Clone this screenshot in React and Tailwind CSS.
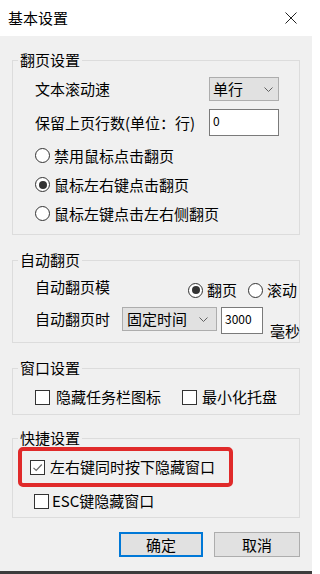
import React from "react";

const font = { fontFamily: '"Noto Sans CJK SC", "Noto Sans", sans-serif' };

function Chevron() {
  return (
    <svg width="9" height="5" viewBox="0 0 9 5" className="shrink-0">
      <path d="M0.5 0.5 L4.5 4.5 L8.5 0.5" fill="none" stroke="#606060" strokeWidth="1" />
    </svg>
  );
}

function Radio({ checked, label }) {
  return (
    <div className="flex items-center gap-[4px]">
      <span className="w-[15px] h-[15px] rounded-full border border-[#333] bg-white flex items-center justify-center shrink-0">
        {checked && <span className="w-[8px] h-[8px] rounded-full bg-[#333]" />}
      </span>
      <span className="whitespace-nowrap">{label}</span>
    </div>
  );
}

function Checkbox({ checked, label, gap = "gap-[6px]" }) {
  return (
    <div className={`flex items-center ${gap}`}>
      <span className="w-[15px] h-[15px] border border-[#333] bg-white flex items-center justify-center shrink-0">
        {checked && (
          <svg width="13" height="13" viewBox="0 0 13 13">
            <path d="M2.5 6.8 L5.2 9.5 L10.8 3.5" fill="none" stroke="#666" strokeWidth="1.2" />
          </svg>
        )}
      </span>
      <span className="whitespace-nowrap">{label}</span>
    </div>
  );
}

function Group({ title, className = "", children }) {
  return (
    <fieldset className={`min-w-0 border border-[#dcdcdc] ${className}`}>
      <legend className="ml-[5px] px-[2px] leading-[20px]">{title}</legend>
      {children}
    </fieldset>
  );
}

export default function App() {
  return (
    <div
      className="w-[312px] h-[574px] flex flex-col bg-[#f0f0f0] text-[15px] leading-[20px] text-black overflow-hidden"
      style={font}
    >
      {/* 标题栏 */}
      <div className="h-[36px] bg-white flex items-center justify-between pl-[8px] pr-[15px] shrink-0">
        <span>基本设置</span>
        <svg width="12" height="12" viewBox="0 0 12 12">
          <path d="M0.5 0.5 L11.5 11.5 M11.5 0.5 L0.5 11.5" stroke="#222" strokeWidth="1" />
        </svg>
      </div>

      <div className="flex-1 flex flex-col px-3">
        {/* 翻页设置 */}
        <Group title="翻页设置" className="mt-[14px]">
          <div className="pl-[22px] pr-[20px] pt-[7px] pb-[6px]">
            <div className="h-[24px] flex items-center justify-between">
              <span>文本滚动速</span>
              <div className="w-[70px] h-[24px] bg-[#e1e1e1] border border-[#adadad] flex items-center justify-between pl-[3px] pr-[5px]">
                <span>单行</span>
                <Chevron />
              </div>
            </div>
            <div className="mt-[8px] h-[27px] flex items-center justify-between">
              <span>保留上页行数(单位：行)</span>
              <div className="w-[70px] h-[27px] bg-white border border-[#7a7a7a] pl-[3px] pt-[1px] text-[12px] leading-[20px]">
                0
              </div>
            </div>
            <div className="mt-[5px]">
              <div className="h-[29px] flex items-center">
                <Radio label="禁用鼠标点击翻页" />
              </div>
              <div className="h-[29px] flex items-center">
                <Radio checked label="鼠标左右键点击翻页" />
              </div>
              <div className="h-[29px] flex items-center">
                <Radio label="鼠标左键点击左右侧翻页" />
              </div>
            </div>
          </div>
        </Group>

        {/* 自动翻页 */}
        <Group title="自动翻页" className="mt-[15px]">
          <div className="pl-[22px]">
            <div className="mt-[4px] flex items-start">
              <span className="w-[153px] h-[26px] leading-[26px] shrink-0">自动翻页模</span>
              <div className="mt-[6px] h-[20px] flex items-center gap-[11px]">
                <Radio checked label="翻页" />
                <Radio label="滚动" />
              </div>
            </div>
            <div className="mt-[7px] h-[35px] flex items-start">
              <span className="w-[87px] h-[24px] leading-[24px] shrink-0">自动翻页时</span>
              <div className="w-[95px] h-[24px] bg-[#e1e1e1] border border-[#adadad] flex items-center justify-between pl-[4px] pr-[8px] shrink-0">
                <span>固定时间</span>
                <Chevron />
              </div>
              <div className="ml-[4px] w-[42px] h-[27px] bg-white border border-[#7a7a7a] pl-[3px] pt-[1px] text-[12px] leading-[20px] shrink-0">
                3000
              </div>
              <span className="ml-[7px] mt-[14px] whitespace-nowrap shrink-0">毫秒</span>
            </div>
          </div>
        </Group>

        {/* 窗口设置 */}
        <Group title="窗口设置" className="mt-[15px]">
          <div className="pl-[22px] pt-[7px] pb-[5px]">
            <div className="h-[24px] flex items-center">
              <div className="w-[147px] shrink-0">
                <Checkbox label="隐藏任务栏图标" />
              </div>
              <Checkbox label="最小化托盘" gap="gap-[5px]" />
            </div>
          </div>
        </Group>

        {/* 快捷设置 */}
        <Group title="快捷设置" className="mt-[13px]">
          <div className="pb-[5px]">
            <div className="mt-[-1px] ml-[5px] w-[215px] h-[40px] border-4 border-[#e02a2a] rounded-[5px] flex items-center pl-[8px]">
              <Checkbox checked label="左右键同时按下隐藏窗口" gap="gap-[5px]" />
            </div>
            <div className="mt-[3px] h-[22px] flex items-center pl-[21px]">
              <Checkbox label="ESC键隐藏窗口" gap="gap-[3px]" />
            </div>
          </div>
        </Group>

        {/* 按钮 */}
        <div className="mt-[14px] flex justify-end gap-[11px]">
          <button className="w-[84px] h-[25px] bg-[#e1e1e1] border-2 border-[#0078d7] flex items-center justify-center">
            确定
          </button>
          <button className="w-[86px] h-[25px] bg-[#e1e1e1] border border-[#adadad] flex items-center justify-center">
            取消
          </button>
        </div>
      </div>

      <div className="h-[3px] bg-[#3c3c3c] shrink-0" />
    </div>
  );
}
